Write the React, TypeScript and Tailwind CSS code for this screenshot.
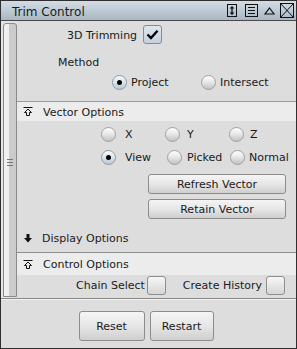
import React from "react";

const font = "font-['DejaVu_Sans',_'Liberation_Sans',_sans-serif]";

function Txt({ children, className = "" }: { children: React.ReactNode; className?: string }) {
  return <span className={"pt-[3px] " + className}>{children}</span>;
}

function Radio({ checked }: { checked?: boolean }) {
  return (
    <span
      className={
        "flex h-[15px] w-[15px] shrink-0 items-center justify-center rounded-full border " +
        (checked
          ? "border-[#8b9aa6] bg-[linear-gradient(#f7fafc,#dde7ee_45%,#b9c9d5)]"
          : "border-[#a0a0a0] bg-[linear-gradient(#ffffff,#e8e8e8_45%,#c2c2c2)]")
      }
    >
      {checked && <span className="h-[5px] w-[5px] rounded-full bg-black" />}
    </span>
  );
}

function Check({ checked }: { checked?: boolean }) {
  return (
    <span
      className={
        "flex h-[19px] w-[19px] shrink-0 items-center justify-center rounded-[3px] border " +
        (checked
          ? "border-[#7d8d9a] bg-[linear-gradient(#dfe7ee,#c3d1dd)]"
          : "border-[#8e8e8e] bg-[linear-gradient(#f7f7f7,#d6d6d6)]")
      }
    >
      {checked && (
        <svg width="13" height="11" viewBox="0 0 13 11">
          <path d="M1.5 5.5 L5 9 L11.5 1.8" fill="none" stroke="#000" strokeWidth="2.4" />
        </svg>
      )}
    </span>
  );
}

function Btn({ label, className }: { label: string; className: string }) {
  return (
    <div
      className={
        "flex items-center justify-center rounded-[3px] border border-[#8c8c8c] bg-[linear-gradient(#f5f5f5,#e6e6e6_50%,#cfcfcf)] pt-[2px] text-[11px] text-[#1a1a1a] " +
        className
      }
    >
      {label}
    </div>
  );
}

function CollapseIcon() {
  return (
    <svg width="10" height="9" viewBox="0 0 10 9" className="shrink-0">
      <path d="M0.5 0.5 H9.5" stroke="#111" strokeWidth="1" />
      <path d="M5 2 L8.5 5.5 H6.5 V8.5 H3.5 V5.5 H1.5 Z" fill="none" stroke="#111" strokeWidth="1" />
    </svg>
  );
}

function ExpandIcon() {
  return (
    <svg width="10" height="9" viewBox="0 0 10 9" className="shrink-0">
      <path d="M3.5 0 H6.5 V4 H9 L5 8.5 L1 4 H3.5 Z" fill="#111" />
    </svg>
  );
}

function TitleIcons() {
  return (
    <div className="flex items-center">
      <svg width="10" height="13" viewBox="0 0 10 13" className="mr-[8px]">
        <rect x="0.5" y="0.5" width="9" height="12" fill="none" stroke="#111" />
        <path d="M5 2 L7.5 4.5 H2.5 Z M5 11 L7.5 8.5 H2.5 Z" fill="#111" />
        <path d="M5 4 V9" stroke="#111" strokeWidth="1.4" />
      </svg>
      <svg width="13" height="13" viewBox="0 0 13 13" className="mr-[6px]">
        <rect x="0.5" y="0.5" width="12" height="12" fill="none" stroke="#111" />
        <path d="M3 3.5 H10 M3 6.5 H10 M3 9.5 H10" stroke="#111" />
      </svg>
      <svg width="11" height="8" viewBox="0 0 11 8" className="mr-[5px]">
        <path d="M5.5 1 L10 7 H1 Z" fill="none" stroke="#111" strokeWidth="1.2" />
      </svg>
      <svg width="14" height="15" viewBox="0 0 14 15">
        <rect x="0.5" y="0.5" width="13" height="14" fill="none" stroke="#111" />
        <path d="M0.5 0.5 L13.5 14.5 M13.5 0.5 L0.5 14.5" stroke="#111" />
      </svg>
    </div>
  );
}

export default function App() {
  return (
    <div
      className={
        "flex h-[349px] w-[297px] flex-col border border-[#2f2f2f] bg-[#dddddd] text-[11px] text-[#1a1a1a] " +
        font
      }
    >
      {/* title bar */}
      <div className="flex h-[20px] shrink-0 items-center justify-between border-b border-[#4a4a4a] bg-[linear-gradient(#d3dde6,#a8b7c4)] pl-[11px] pr-[2px]">
        <span className="pt-[2px] text-[12px] leading-none">Trim Control</span>
        <TitleIcons />
      </div>

      {/* main */}
      <div className="flex h-[277px] shrink-0">
        <div className="flex w-[16px] shrink-0 bg-[#e4e4e4] pb-[1px] pl-[2px] pt-[2px]">
          <div className="flex flex-1 items-center justify-center rounded-t-[3px] border border-[#8a8a8a] bg-[linear-gradient(to_right,#efefef_45%,#cbcbcb_45%)]">
            <div className="flex flex-col gap-[2px] pt-[4px]">
              <span className="h-[1px] w-[6px] bg-[#777]" />
              <span className="h-[1px] w-[6px] bg-[#777]" />
              <span className="h-[1px] w-[6px] bg-[#777]" />
            </div>
          </div>
        </div>

        <div className="flex flex-1 flex-col">
          <div className="mt-[4px] flex h-[19px] items-center gap-[6px] pl-[50px]">
            <Txt>3D Trimming</Txt>
            <Check checked />
          </div>
          <div className="mt-[11px] flex h-[14px] items-center pl-[41px]">
            <Txt>Method</Txt>
          </div>
          <div className="mt-[5px] flex h-[16px] items-center pl-[95px]">
            <Radio checked />
            <Txt className="ml-[4px] w-[70px]">Project</Txt>
            <Radio />
            <Txt className="ml-[4px]">Intersect</Txt>
          </div>

          <div className="mt-[11px] flex h-[20px] items-center gap-[10px] border-t border-[#9a9a9a] bg-[#ececec] pl-[6px]">
            <CollapseIcon />
            <Txt>Vector Options</Txt>
          </div>

          <div className="mt-[5px] flex h-[16px] items-center pl-[84px]">
            <Radio />
            <Txt className="ml-[9px] w-[40px]">X</Txt>
            <Radio />
            <Txt className="ml-[7px] w-[42px]">Y</Txt>
            <Radio />
            <Txt className="ml-[6px]">Z</Txt>
          </div>
          <div className="mt-[7px] flex h-[16px] items-center pl-[84px]">
            <Radio checked />
            <Txt className="ml-[9px] w-[42px]">View</Txt>
            <Radio />
            <Txt className="ml-[5px] w-[43px]">Picked</Txt>
            <Radio />
            <Txt className="ml-[4px]">Normal</Txt>
          </div>

          <Btn label="Refresh Vector" className="ml-[131px] mt-[9px] h-[20px] w-[138px]" />
          <Btn label="Retain Vector" className="ml-[131px] mt-[5px] h-[20px] w-[138px]" />

          <div className="mt-[11px] flex h-[16px] items-center gap-[9px] pl-[6px]">
            <ExpandIcon />
            <Txt>Display Options</Txt>
          </div>

          <div className="mt-[6px] flex h-[23px] items-center gap-[10px] border-t border-[#8e8e8e] bg-[#ececec] pl-[6px]">
            <CollapseIcon />
            <Txt>Control Options</Txt>
          </div>

          <div className="flex h-[20px] items-center pl-[59px]">
            <Txt>Chain Select</Txt>
            <span className="ml-[2px]">
              <Check />
            </span>
            <Txt className="ml-[17px]">Create History</Txt>
            <span className="ml-[4px]">
              <Check />
            </span>
          </div>
        </div>
      </div>

      {/* footer */}
      <div className="h-[2px] shrink-0 border-t border-[#8a8a8a] bg-[#f2f2f2]" />
      <div className="flex flex-1 items-start justify-center gap-[5px] pr-[5px] pt-[11px]">
        <Btn label="Reset" className="h-[30px] w-[66px]" />
        <Btn label="Restart" className="h-[30px] w-[64px]" />
      </div>
    </div>
  );
}
